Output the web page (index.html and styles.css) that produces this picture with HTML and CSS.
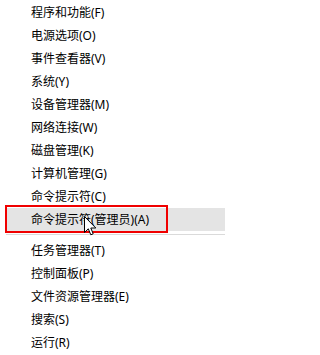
FILE: index.html
```html
<!DOCTYPE html>
<html lang="zh-CN">
<head>
<meta charset="utf-8">
<title>Win+X 菜单</title>
<link rel="stylesheet" href="styles.css">
</head>
<body>
<div class="menu">
  <div class="group">
    <div class="item">程序和功能(F)</div>
    <div class="item">电源选项(O)</div>
    <div class="item">事件查看器(V)</div>
    <div class="item">系统(Y)</div>
    <div class="item">设备管理器(M)</div>
    <div class="item">网络连接(W)</div>
    <div class="item">磁盘管理(K)</div>
    <div class="item">计算机管理(G)</div>
    <div class="item">命令提示符(C)</div>
    <div class="item active">命令提示符(管理员)(A)
      <span class="mark"></span>
      <svg class="cursor" width="13" height="20" viewBox="0 0 13 20"><path d="M0.5 0.5 L0.5 16.5 L4.3 12.8 L6.8 18.8 L9.2 17.8 L6.8 12 L11.8 12 Z" fill="#fff" stroke="#000" stroke-width="1" stroke-linejoin="miter"/></svg>
    </div>
  </div>
  <div class="sep"></div>
  <div class="group">
    <div class="item">任务管理器(T)</div>
    <div class="item">控制面板(P)</div>
    <div class="item">文件资源管理器(E)</div>
    <div class="item">搜索(S)</div>
    <div class="item">运行(R)</div>
  </div>
</div>
</body>
</html>
```
FILE: styles.css
```css
html, body {
  margin: 0;
  padding: 0;
  background: #ffffff;
}
.menu {
  width: 225px;
  padding-top: 1px;
  font-family: "Segoe UI", "Noto Sans", "Noto Sans CJK SC", sans-serif;
  font-size: 12px;
  color: #000000;
}
.group {
  display: flex;
  flex-direction: column;
}
.item {
  height: 23px;
  line-height: 23px;
  padding-left: 31px;
  white-space: nowrap;
}
.item.active {
  position: relative;
  margin-left: 6px;
  padding-left: 25px;
  background: #e4e4e4;
}
.mark {
  position: absolute;
  left: -1px;
  top: -3px;
  width: 163px;
  height: 28px;
  box-sizing: border-box;
  border: 2.5px solid #f00000;
}
.cursor {
  position: absolute;
  left: 78px;
  top: 8px;
}
.sep {
  height: 1px;
  margin: 3px 0 4px 6px;
  background: #dadada;
}
```
